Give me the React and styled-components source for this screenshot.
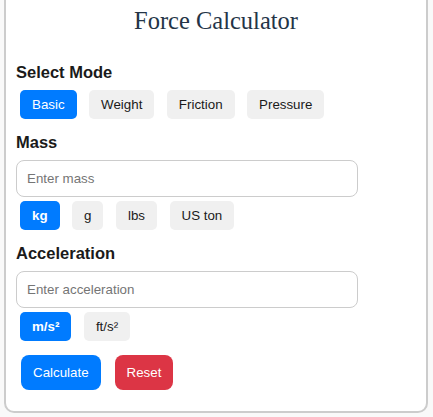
import { useState } from "react";
import styled, { createGlobalStyle } from "styled-components";

const GlobalStyle = createGlobalStyle`
    html, body {
        margin: 0;
        padding: 0;
        background-color: #F9F9F9;
        font-family: 'Liberation Sans', Arial, sans-serif;
    }
`;

const MODES = ["Basic", "Weight", "Friction", "Pressure"];
const MASS_UNITS = ["kg", "g", "lbs", "US ton"];
const ACCEL_UNITS = ["m/s²", "ft/s²"];

export default function App(){
    const [mode, setMode] = useState("Basic");
    const [mass, setMass] = useState("");
    const [massUnit, setMassUnit] = useState("kg");
    const [accel, setAccel] = useState("");
    const [accelUnit, setAccelUnit] = useState("m/s²");

    function reset(){
        setMass("");
        setAccel("");
    }

    return(
        <>
            <GlobalStyle/>
            <CardStyle>
                <TitleStyle>Force Calculator</TitleStyle>

                <SectionStyle>
                    <LabelStyle>Select Mode</LabelStyle>
                    <OptionRowStyle>
                        {MODES.map((m) => (
                            <OptionButtonStyle key={m} $active={m === mode} onClick={() => setMode(m)}>
                                {m}
                            </OptionButtonStyle>
                        ))}
                    </OptionRowStyle>
                </SectionStyle>

                <SectionStyle>
                    <LabelStyle>Mass</LabelStyle>
                    <InputStyle
                        placeholder="Enter mass"
                        type="number"
                        value={mass}
                        onChange={(e) => setMass(e.target.value)}
                    />
                    <OptionRowStyle $tight>
                        {MASS_UNITS.map((u) => (
                            <OptionButtonStyle key={u} $active={u === massUnit} $bold onClick={() => setMassUnit(u)}>
                                {u}
                            </OptionButtonStyle>
                        ))}
                    </OptionRowStyle>
                </SectionStyle>

                <SectionStyle>
                    <LabelStyle>Acceleration</LabelStyle>
                    <InputStyle
                        placeholder="Enter acceleration"
                        type="number"
                        value={accel}
                        onChange={(e) => setAccel(e.target.value)}
                    />
                    <OptionRowStyle $tight>
                        {ACCEL_UNITS.map((u) => (
                            <OptionButtonStyle key={u} $active={u === accelUnit} $bold onClick={() => setAccelUnit(u)}>
                                {u}
                            </OptionButtonStyle>
                        ))}
                    </OptionRowStyle>
                </SectionStyle>

                <ActionRowStyle>
                    <ActionButtonStyle $color="#007BFF">Calculate</ActionButtonStyle>
                    <ActionButtonStyle $color="#DC3545" onClick={reset}>Reset</ActionButtonStyle>
                </ActionRowStyle>
            </CardStyle>
        </>
    );
}

const CardStyle = styled.div`
    margin: -11px 5px 0 4px;
    padding: 16px 10px 21px;
    background-color: #FFF;
    border: 2px solid #CCC;
    border-radius: 10px;
`;

const TitleStyle = styled.h2`
    margin: 0 0 28px;
    font-family: 'Liberation Serif', 'Times New Roman', serif;
    font-size: 24.5px;
    line-height: 28px;
    font-weight: 400;
    text-align: center;
    color: #243447;
`;

const SectionStyle = styled.div`
    display: flex;
    flex-direction: column;
    align-items: flex-start;
    margin-bottom: 14px;
`;

const LabelStyle = styled.label`
    display: block;
    margin-bottom: 9px;
    font-size: 16.5px;
    line-height: 18px;
    font-weight: 700;
    color: #1A1A1A;
`;

const OptionRowStyle = styled.div`
    display: flex;
    gap: 12.5px;
    margin: ${(p) => (p.$tight ? "4px 0 0 4px" : "0 0 0 4px")};
`;

const OptionButtonStyle = styled.button`
    padding: 7px 12px;
    border: none;
    border-radius: 5px;
    background-color: ${(p) => (p.$active ? "#007BFF" : "#F0F0F0")};
    color: ${(p) => (p.$active ? "#FFF" : "#1A1A1A")};
    font-family: 'Liberation Sans', Arial, sans-serif;
    font-size: 13.333px;
    line-height: 15px;
    font-weight: ${(p) => (p.$active && p.$bold ? 700 : 400)};
    cursor: pointer;
`;

const InputStyle = styled.input`
    box-sizing: border-box;
    width: 342px;
    height: 37px;
    padding: 0 10px;
    border: 1px solid #CCC;
    border-radius: 8px;
    font-family: 'Liberation Sans', Arial, sans-serif;
    font-size: 13.333px;
    outline: none;

    &::placeholder{
        color: #757575;
    }
`;

const ActionRowStyle = styled.div`
    display: flex;
    gap: 14px;
    margin: 1px 0 0 5px;
`;

const ActionButtonStyle = styled.button`
    padding: 10px 12px;
    border: none;
    border-radius: 8px;
    background-color: ${(p) => p.$color};
    color: #FFF;
    font-family: 'Liberation Sans', Arial, sans-serif;
    font-size: 13.333px;
    line-height: 15px;
    cursor: pointer;
`;
